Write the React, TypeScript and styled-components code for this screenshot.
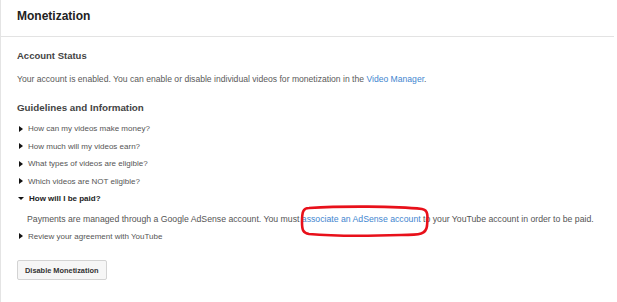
import { createGlobalStyle } from "styled-components";
import styled from "styled-components";

const GlobalStyle = createGlobalStyle`
  html, body {
    margin: 0;
    padding: 0;
    background: #fff;
  }
  body {
    font-family: "Liberation Sans", Arial, sans-serif;
  }
`;

const Page = styled.div`
  min-height: 302px;
  border-left: 1px solid #e4e4e4;
  box-sizing: border-box;
  width: 614px;
`;

const Header = styled.div`
  height: 37px;
  border-bottom: 1px solid #e3e3e3;
  display: flex;
  align-items: center;
  padding: 0 0 4px 16px;
  box-sizing: border-box;
`;

const Title = styled.h1`
  margin: 0;
  font-size: 12px;
  font-weight: bold;
  color: #222;
`;

const Body = styled.div`
  padding: 11.5px 16px 0;
`;

const SectionTitle = styled.h2<{ $gap?: number }>`
  margin: ${(p) => p.$gap ?? 0}px 0 0;
  font-size: ${(p) => (p.$gap ? 9.8 : 9.5)}px;
  line-height: 14px;
  font-weight: bold;
  color: #444;
`;

const Text = styled.p`
  margin: 9px 0 0;
  font-size: 8.6px;
  line-height: 14px;
  color: #5a5a5a;
`;

const Link = styled.a`
  color: #3f86cf;
  text-decoration: none;
`;

const List = styled.ul<{ $top?: number }>`
  list-style: none;
  margin: ${(p) => p.$top ?? 5}px 0 0;
  padding: 0;
`;

const Item = styled.li<{ $open?: boolean }>`
  display: flex;
  align-items: center;
  height: 17.5px;
  font-size: 8px;
  color: ${(p) => (p.$open ? "#222" : "#555")};
  font-weight: ${(p) => (p.$open ? "bold" : "normal")};
`;

const Arrow = styled.span<{ $open?: boolean }>`
  display: inline-block;
  width: 0;
  height: 0;
  margin: ${(p) => (p.$open ? "0 5px 0 1px" : "0 5px 0 2px")};
  border-style: solid;
  border-color: transparent;
  ${(p) =>
    p.$open
      ? "border-width: 3px 3px 0 3px; border-top-color: #111;"
      : "border-width: 3px 0 3px 4px; border-left-color: #111;"}
`;

const Answer = styled.p`
  margin: 3px 0 0 10px;
  font-size: 8.7px;
  line-height: 16px;
  color: #555;
  white-space: nowrap;
`;

const Marked = styled.span`
  position: relative;
`;

const Circle = styled.svg`
  position: absolute;
  left: -1px;
  top: -8px;
  width: 128px;
  height: 31px;
  overflow: visible;
  pointer-events: none;
`;

const Button = styled.button`
  margin-top: 15px;
  height: 20px;
  padding: 0 7px;
  border: 1px solid #d3d3d3;
  border-radius: 2px;
  background: #f6f6f6;
  font-family: inherit;
  font-size: 7.4px;
  font-weight: bold;
  color: #333;
`;

const items = [
  "How can my videos make money?",
  "How much will my videos earn?",
  "What types of videos are eligible?",
  "Which videos are NOT eligible?",
];

export default function App() {
  return (
    <Page>
      <GlobalStyle />
      <Header>
        <Title>Monetization</Title>
      </Header>
      <Body>
        <SectionTitle>Account Status</SectionTitle>
        <Text>
          Your account is enabled. You can enable or disable individual videos
          for monetization in the <Link href="#">Video Manager</Link>.
        </Text>
        <SectionTitle $gap={15.5}>Guidelines and Information</SectionTitle>
        <List>
          {items.map((t) => (
            <Item key={t}>
              <Arrow />
              {t}
            </Item>
          ))}
          <Item $open>
            <Arrow $open />
            How will I be paid?
          </Item>
        </List>
        <Answer>
          Payments are managed through a Google AdSense account. You must{" "}
          <Marked>
            <Link href="#">associate an AdSense account</Link>
            <Circle viewBox="0 0 128 31" preserveAspectRatio="none">
              <path
                d="M8 2 C40 0 95 0 121 3 C127 4 127 9 126 20 C125 28 120 29 100 29 C70 30 30 30 8 28 C2 27 1 24 1 16 C1 6 2 2 8 2 Z"
                fill="none"
                stroke="#e8101a"
                strokeWidth="2.6"
              />
            </Circle>
          </Marked>{" "}
          to your YouTube account in order to be paid.
        </Answer>
        <List $top={1}>
          <Item>
            <Arrow />
            Review your agreement with YouTube
          </Item>
        </List>
        <Button>Disable Monetization</Button>
      </Body>
    </Page>
  );
}
